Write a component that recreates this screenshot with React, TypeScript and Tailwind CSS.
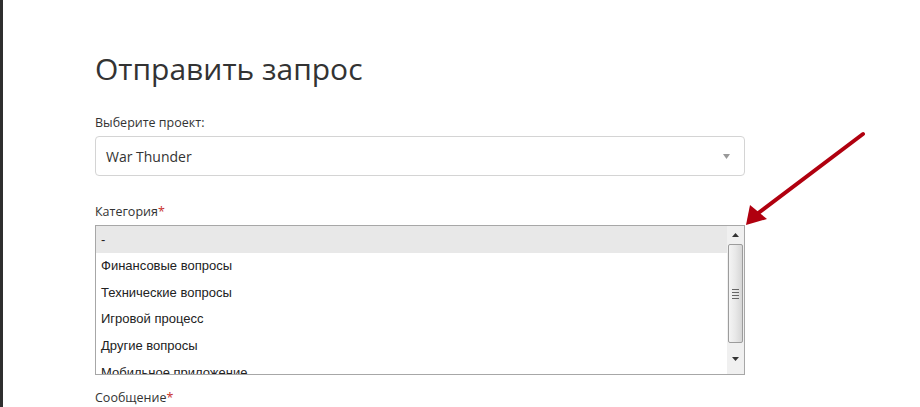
import { type ReactNode } from 'react';

const CATEGORIES = [
  '-',
  'Финансовые вопросы',
  'Технические вопросы',
  'Игровой процесс',
  'Другие вопросы',
  'Мобильное приложение',
];

function FieldLabel({ children, required }: { children: ReactNode; required?: boolean }) {
  return (
    <div className="text-[12.5px] leading-[18px] text-[#333]">
      {children}
      {required && <span className="text-[#c9302c]">*</span>}
    </div>
  );
}

// Classic scrollbar with arrows and a ribbed thumb
function ListScrollbar() {
  return (
    <div className="flex w-[17px] shrink-0 flex-col items-center bg-[#f0f0f0]">
      <div className="flex h-[18px] w-full items-center justify-center">
        <svg width="7" height="4" viewBox="0 0 7 4">
          <path d="M3.5 0 L7 4 H0 Z" fill="#333" />
        </svg>
      </div>
      <div className="flex h-[99px] w-[15px] items-center justify-center rounded-[2px] border border-[#9c9c9c] bg-gradient-to-r from-[#f4f4f4] via-[#e8e8e8] to-[#d6d6d6]">
        <div className="flex flex-col gap-[2px]">
          <div className="h-px w-[7px] bg-[#666]" />
          <div className="h-px w-[7px] bg-[#666]" />
          <div className="h-px w-[7px] bg-[#666]" />
          <div className="h-px w-[7px] bg-[#666]" />
        </div>
      </div>
      <div className="flex flex-1 items-center justify-center">
        <svg width="7" height="4" viewBox="0 0 7 4">
          <path d="M0 0 H7 L3.5 4 Z" fill="#333" />
        </svg>
      </div>
    </div>
  );
}

export default function App() {
  return (
    <div className="flex h-[407px] w-[920px] overflow-hidden bg-white font-['Open_Sans',sans-serif]">
      <div className="w-[3px] shrink-0 bg-[#2f2f2f]" />
      <div className="relative flex-1 pl-[92px] pt-[47px]">
        <h1 className="text-[30px] font-normal leading-[44px] text-[#333]">Отправить запрос</h1>

        <div className="mt-[23px] w-[650px]">
          <FieldLabel>Выберите проект:</FieldLabel>
          <div className="mt-[4px] flex h-[40px] items-center justify-between rounded-[4px] border border-[#d4d4d4] pl-[10px] pr-[14px]">
            <span className="text-[14px] text-[#333]">War Thunder</span>
            <svg width="7" height="5" viewBox="0 0 7 5">
              <path d="M0 0 H7 L3.5 5 Z" fill="#999" />
            </svg>
          </div>

          <div className="mt-[27px]">
            <FieldLabel required>Категория</FieldLabel>
          </div>
          <div className="mt-[4px] flex h-[150px] overflow-hidden border border-[#a7a7a7]">
            <div className="flex-1 font-['Liberation_Sans',Arial,sans-serif] text-[13px] text-[#222]">
              {CATEGORIES.map((c, i) => (
                <div
                  key={c}
                  className={`flex h-[26.6px] items-center pl-[5px] ${i === 0 ? 'bg-[#e8e8e8]' : ''}`}
                >
                  {c}
                </div>
              ))}
            </div>
            <ListScrollbar />
          </div>

          <div className="mt-[14px]">
            <FieldLabel required>Сообщение</FieldLabel>
          </div>
        </div>

        {/* pointer arrow toward the category list */}
        <svg
          className="pointer-events-none absolute left-0 top-0"
          width="917"
          height="407"
          viewBox="3 0 917 407"
        >
          <line x1="863" y1="134" x2="757" y2="214" stroke="#b0000f" strokeWidth="4" strokeLinecap="round" />
          <path d="M746 225 L750 205 L767 219 Z" fill="#b0000f" />
        </svg>
      </div>
    </div>
  );
}
